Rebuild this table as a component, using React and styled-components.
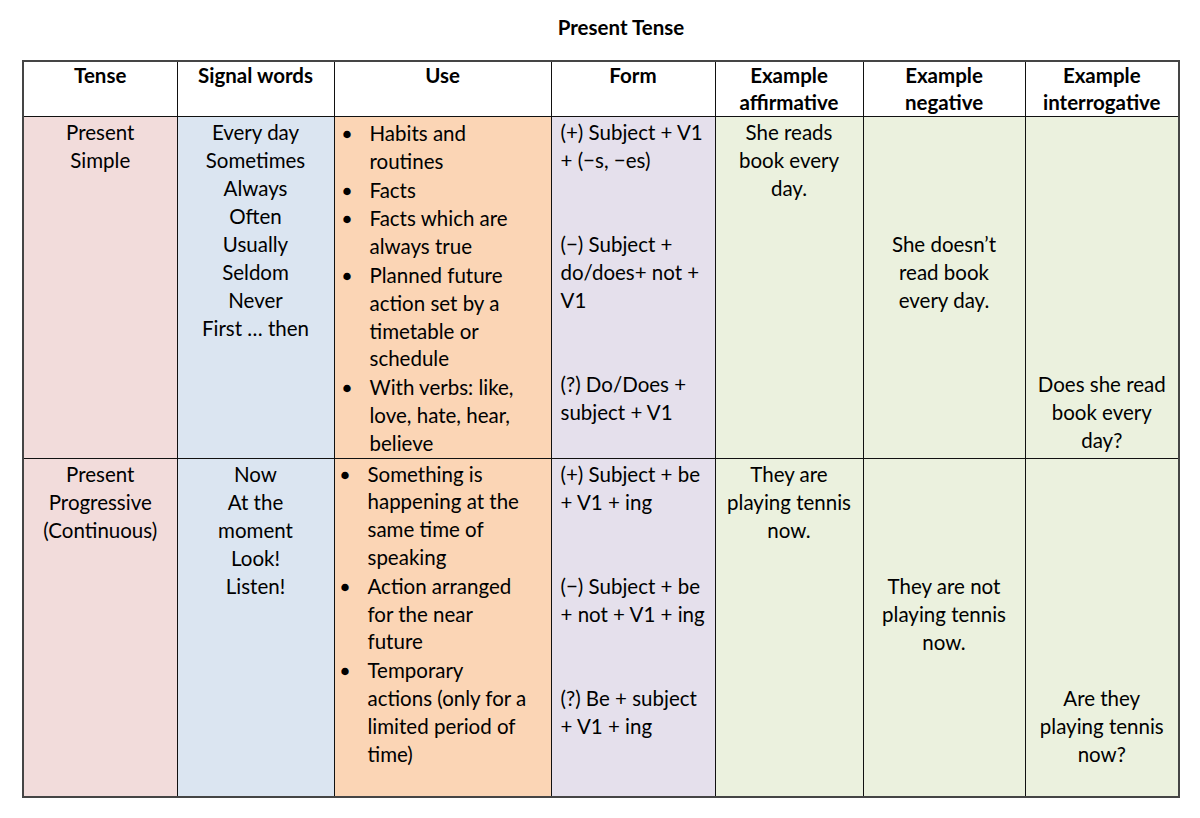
import React from "react";
import styled, { createGlobalStyle } from "styled-components";

const GlobalStyle = createGlobalStyle`
  html, body {
    margin: 0;
    padding: 0;
    background: #ffffff;
  }
  body {
    font-family: Lato, "Open Sans", sans-serif;
    color: #000;
  }
`;

const Page = styled.div`
  width: 1200px;
  height: 818px;
  padding: 13px 22px 0 22px;
  box-sizing: border-box;
`;

const Title = styled.h1`
  margin: 0 0 19px 0;
  padding-left: 42px;
  font-size: 20.5px;
  line-height: 28px;
  font-weight: 700;
  text-align: center;
`;

const Table = styled.table`
  width: 1156px;
  border-collapse: collapse;
  table-layout: fixed;
  border: 2px solid #454545;
  font-size: 20.5px;
`;

const HeadCell = styled.th`
  height: 54px;
  padding: 0;
  vertical-align: top;
  text-align: center;
  font-weight: 700;
  border: 1px solid #111;
  background: #fff;
`;

const Cell = styled.td`
  padding: ${(p) => (p.$align === "left" ? `1px 2px 0 ${p.$pad}px` : "1px 2px 0")};
  vertical-align: top;
  text-align: ${(p) => p.$align || "center"};
  line-height: 28px;
  border: 1px solid #111;
  background: ${(p) => p.$bg};
`;

const Row = styled.tr`
  height: ${(p) => p.$height}px;
`;

const Line = styled.div`
  height: ${(p) => p.$h || 28}px;
  line-height: ${(p) => p.$h || 28}px;
  white-space: nowrap;
`;

const Bullets = styled.ul`
  margin: 0;
  padding: ${(p) => p.$top}px 0 0 ${(p) => p.$indent || 0}px;
  list-style: none;
  display: flex;
  flex-direction: column;
  gap: 1px;
`;

const Item = styled.li`
  display: grid;
  grid-template-columns: 27px 1fr;
  text-align: left;
`;

const Dot = styled.span`
  line-height: 27.8px;
  font-size: 15px;
`;

const colors = {
  tense: "#f2dcdb",
  signal: "#dbe5f1",
  use: "#fbd5b5",
  form: "#e5e0ec",
  example: "#ebf1de",
};

const widths = [154, 157, 217, 164, 148, 162, 154];

const Lines = ({ lines, h }) =>
  lines.map((l, i) => (
    <Line key={i} $h={h}>
      {l || "\u00a0"}
    </Line>
  ));

const UseList = ({ items, indent, top }) => (
  <Bullets $indent={indent} $top={top}>
    {items.map((lines, i) => (
      <Item key={i}>
        <Dot>●</Dot>
        <div>
          <Lines lines={lines} h={27.8} />
        </div>
      </Item>
    ))}
  </Bullets>
);

const rows = [
  {
    height: 341,
    tense: ["Present", "Simple"],
    signal: ["Every day", "Sometimes", "Always", "Often", "Usually", "Seldom", "Never", "First … then"],
    use: [
      ["Habits and", "routines"],
      ["Facts"],
      ["Facts which are", "always true"],
      ["Planned future", "action set by a", "timetable or", "schedule"],
      ["With verbs: like,", "love, hate, hear,", "believe"],
    ],
    useIndent: 2,
    useTop: 2,
    form: [
      "(+) Subject + V1",
      "+ (−s, −es)",
      "",
      "",
      "(−) Subject +",
      "do/does+ not +",
      "V1",
      "",
      "",
      "(?) Do/Does +",
      "subject + V1",
    ],
    affirmative: ["She reads", "book every", "day."],
    negative: ["", "", "", "", "She doesn’t", "read book", "every day."],
    interrogative: ["", "", "", "", "", "", "", "", "", "Does she read", "book every", "day?"],
  },
  {
    height: 339,
    tense: ["Present", "Progressive", "(Continuous)"],
    signal: ["Now", "At the", "moment", "Look!", "Listen!"],
    use: [
      ["Something is", "happening at the", "same time of", "speaking"],
      ["Action arranged", "for the near", "future"],
      ["Temporary", "actions (only for a", "limited period of", "time)"],
    ],
    useIndent: 0,
    useTop: 1,
    form: [
      "(+) Subject + be",
      "+ V1 + ing",
      "",
      "",
      "(−) Subject + be",
      "+ not + V1 + ing",
      "",
      "",
      "(?) Be + subject",
      "+ V1 + ing",
    ],
    affirmative: ["They are", "playing tennis", "now."],
    negative: ["", "", "", "", "They are not", "playing tennis", "now."],
    interrogative: ["", "", "", "", "", "", "", "", "Are they", "playing tennis", "now?"],
  },
];

const headers = [
  ["Tense"],
  ["Signal words"],
  ["Use"],
  ["Form"],
  ["Example", "affirmative"],
  ["Example", "negative"],
  ["Example", "interrogative"],
];

export default function App() {
  return (
    <Page>
      <GlobalStyle />
      <Title>Present Tense</Title>
      <Table>
        <colgroup>
          {widths.map((w, i) => (
            <col key={i} style={{ width: w }} />
          ))}
        </colgroup>
        <thead>
          <tr>
            {headers.map((h, i) => (
              <HeadCell key={i}>
                <Lines lines={h} h={27} />
              </HeadCell>
            ))}
          </tr>
        </thead>
        <tbody>
          {rows.map((r, i) => (
            <Row key={i} $height={r.height}>
              <Cell $bg={colors.tense}>
                <Lines lines={r.tense} />
              </Cell>
              <Cell $bg={colors.signal}>
                <Lines lines={r.signal} />
              </Cell>
              <Cell $bg={colors.use} $align="left" $pad={6}>
                <UseList items={r.use} indent={r.useIndent} top={r.useTop} />
              </Cell>
              <Cell $bg={colors.form} $align="left" $pad={9}>
                <Lines lines={r.form} />
              </Cell>
              <Cell $bg={colors.example}>
                <Lines lines={r.affirmative} />
              </Cell>
              <Cell $bg={colors.example}>
                <Lines lines={r.negative} />
              </Cell>
              <Cell $bg={colors.example}>
                <Lines lines={r.interrogative} />
              </Cell>
            </Row>
          ))}
        </tbody>
      </Table>
    </Page>
  );
}
